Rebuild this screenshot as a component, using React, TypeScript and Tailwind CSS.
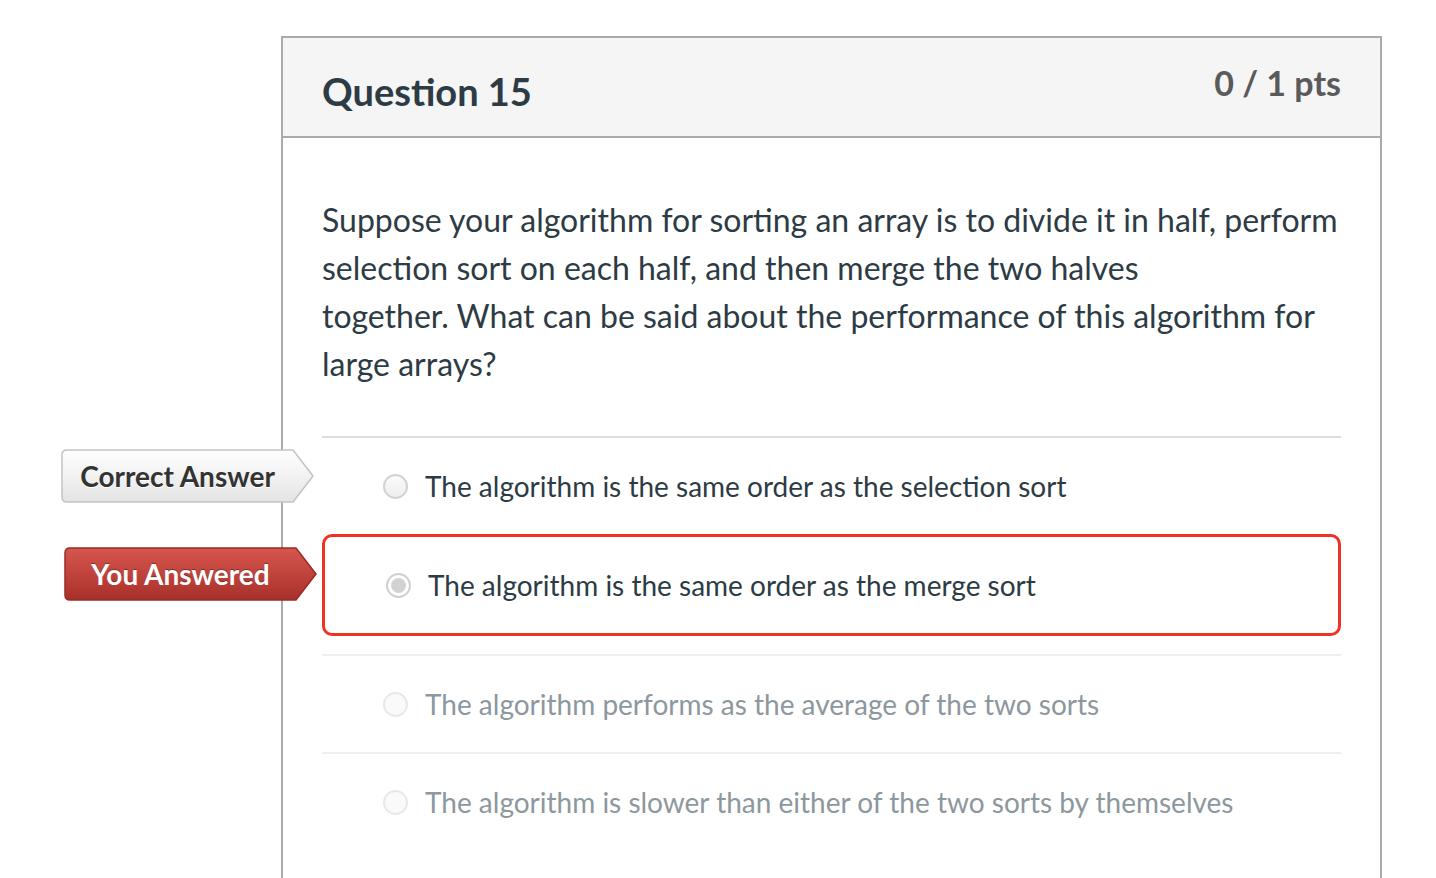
import React from "react";

type Answer = {
  text: string;
  state: "correct" | "picked" | "other";
};

const answers: Answer[] = [
  { text: "The algorithm is the same order as the selection sort", state: "correct" },
  { text: "The algorithm is the same order as the merge sort", state: "picked" },
  { text: "The algorithm performs as the average of the two sorts", state: "other" },
  { text: "The algorithm is slower than either of the two sorts by themselves", state: "other" },
];

function Tag({ label, red }: { label: string; red?: boolean }) {
  const id = red ? "tagRed" : "tagGray";
  return (
    <div className="relative w-[253px] h-[54px]">
      <svg width="253" height="54" viewBox="0 0 253 54" className="absolute inset-0">
        <defs>
          <linearGradient id={id} x1="0" y1="0" x2="0" y2="1">
            <stop offset="0" stopColor={red ? "#d6564e" : "#ffffff"} />
            <stop offset="1" stopColor={red ? "#a8302a" : "#e4e4e4"} />
          </linearGradient>
        </defs>
        <path
          d="M6 1 H232 L252 27 L232 53 H6 Q1 53 1 48 V6 Q1 1 6 1 Z"
          fill={`url(#${id})`}
          stroke={red ? "#9c2a24" : "#c3c3c3"}
          strokeWidth="1.5"
        />
      </svg>
      <div
        className={
          red
            ? "absolute left-0 top-0 w-[233px] h-[54px] flex items-center justify-center text-[28px] font-bold text-white [text-shadow:0_-1px_0_rgba(0,0,0,0.35)]"
            : "absolute left-0 top-0 w-[233px] h-[54px] flex items-center justify-center text-[28px] font-bold text-[#333333] [text-shadow:0_1px_0_#ffffff]"
        }
      >
        {label}
      </div>
    </div>
  );
}

function Radio({ state }: { state: Answer["state"] }) {
  if (state === "picked") {
    return (
      <span className="w-[25px] h-[25px] rounded-full border-2 border-[#cfcfcf] bg-white flex items-center justify-center shrink-0">
        <span className="w-[15px] h-[15px] rounded-full bg-[#d2d2d2]" />
      </span>
    );
  }
  if (state === "other") {
    return (
      <span className="w-[25px] h-[25px] rounded-full border-2 border-[#e8e8e8] bg-[#fafafa] shrink-0" />
    );
  }
  return (
    <span className="w-[25px] h-[25px] rounded-full border-2 border-[#d2d2d2] bg-gradient-to-b from-[#fbfbfb] to-[#eeeeee] shrink-0" />
  );
}

function AnswerRow({ answer, first }: { answer: Answer; first: boolean }) {
  const textColor = answer.state === "other" ? "text-[#8d979e]" : "text-[#2d3b45]";

  if (answer.state === "picked") {
    return (
      <div className="relative pb-[18px]">
        <div className="absolute left-[-258px] top-[13px]">
          <Tag label="You Answered" red />
        </div>
        <div className="h-[102px] border-[3px] border-[#ee3224] rounded-[10px] flex items-center pl-[61px] gap-[17px]">
          <Radio state={answer.state} />
          <span className={`text-[28px] ${textColor}`}>{answer.text}</span>
        </div>
      </div>
    );
  }

  return (
    <div
      className={
        first
          ? "relative h-[96px] flex items-center pl-[61px] gap-[17px]"
          : "relative h-[98px] flex items-center pl-[61px] gap-[17px] border-t-2 border-[#eeeeee]"
      }
    >
      {answer.state === "correct" && (
        <div className="absolute left-[-261px] top-[11px]">
          <Tag label="Correct Answer" />
        </div>
      )}
      <Radio state={answer.state} />
      <span className={`text-[28px] ${textColor}`}>{answer.text}</span>
    </div>
  );
}

export default function App() {
  return (
    <div className="min-h-screen bg-white font-['Lato','Open_Sans',sans-serif] pt-[36px] pl-[281px] overflow-hidden">
      <div className="w-[1101px] h-[900px] border-2 border-b-0 border-[#aaaaaa]">
        <div className="h-[100px] bg-[#f5f5f5] border-b-2 border-[#aaaaaa] flex justify-between px-[39px]">
          <h2 className="text-[38px] leading-none font-bold text-[#2d3b45] mt-[34px]">Question 15</h2>
          <div className="text-[34px] leading-none font-bold text-[#5a5a5a] mt-[28px]">0 / 1 pts</div>
        </div>

        <div className="px-[39px] pt-[58px]">
          <p className="text-[32px] leading-[48px] text-[#2d3b45]">
            Suppose your algorithm for sorting an array is to divide it in half, perform selection sort on each half, and
            then merge the two halves
            <br />
            together. What can be said about the performance of this algorithm for large arrays?
          </p>

          <div className="mt-[48px] border-t-2 border-[#dddddd]">
            {answers.map((a, i) => (
              <AnswerRow key={i} answer={a} first={i === 0} />
            ))}
          </div>
        </div>
      </div>
    </div>
  );
}
